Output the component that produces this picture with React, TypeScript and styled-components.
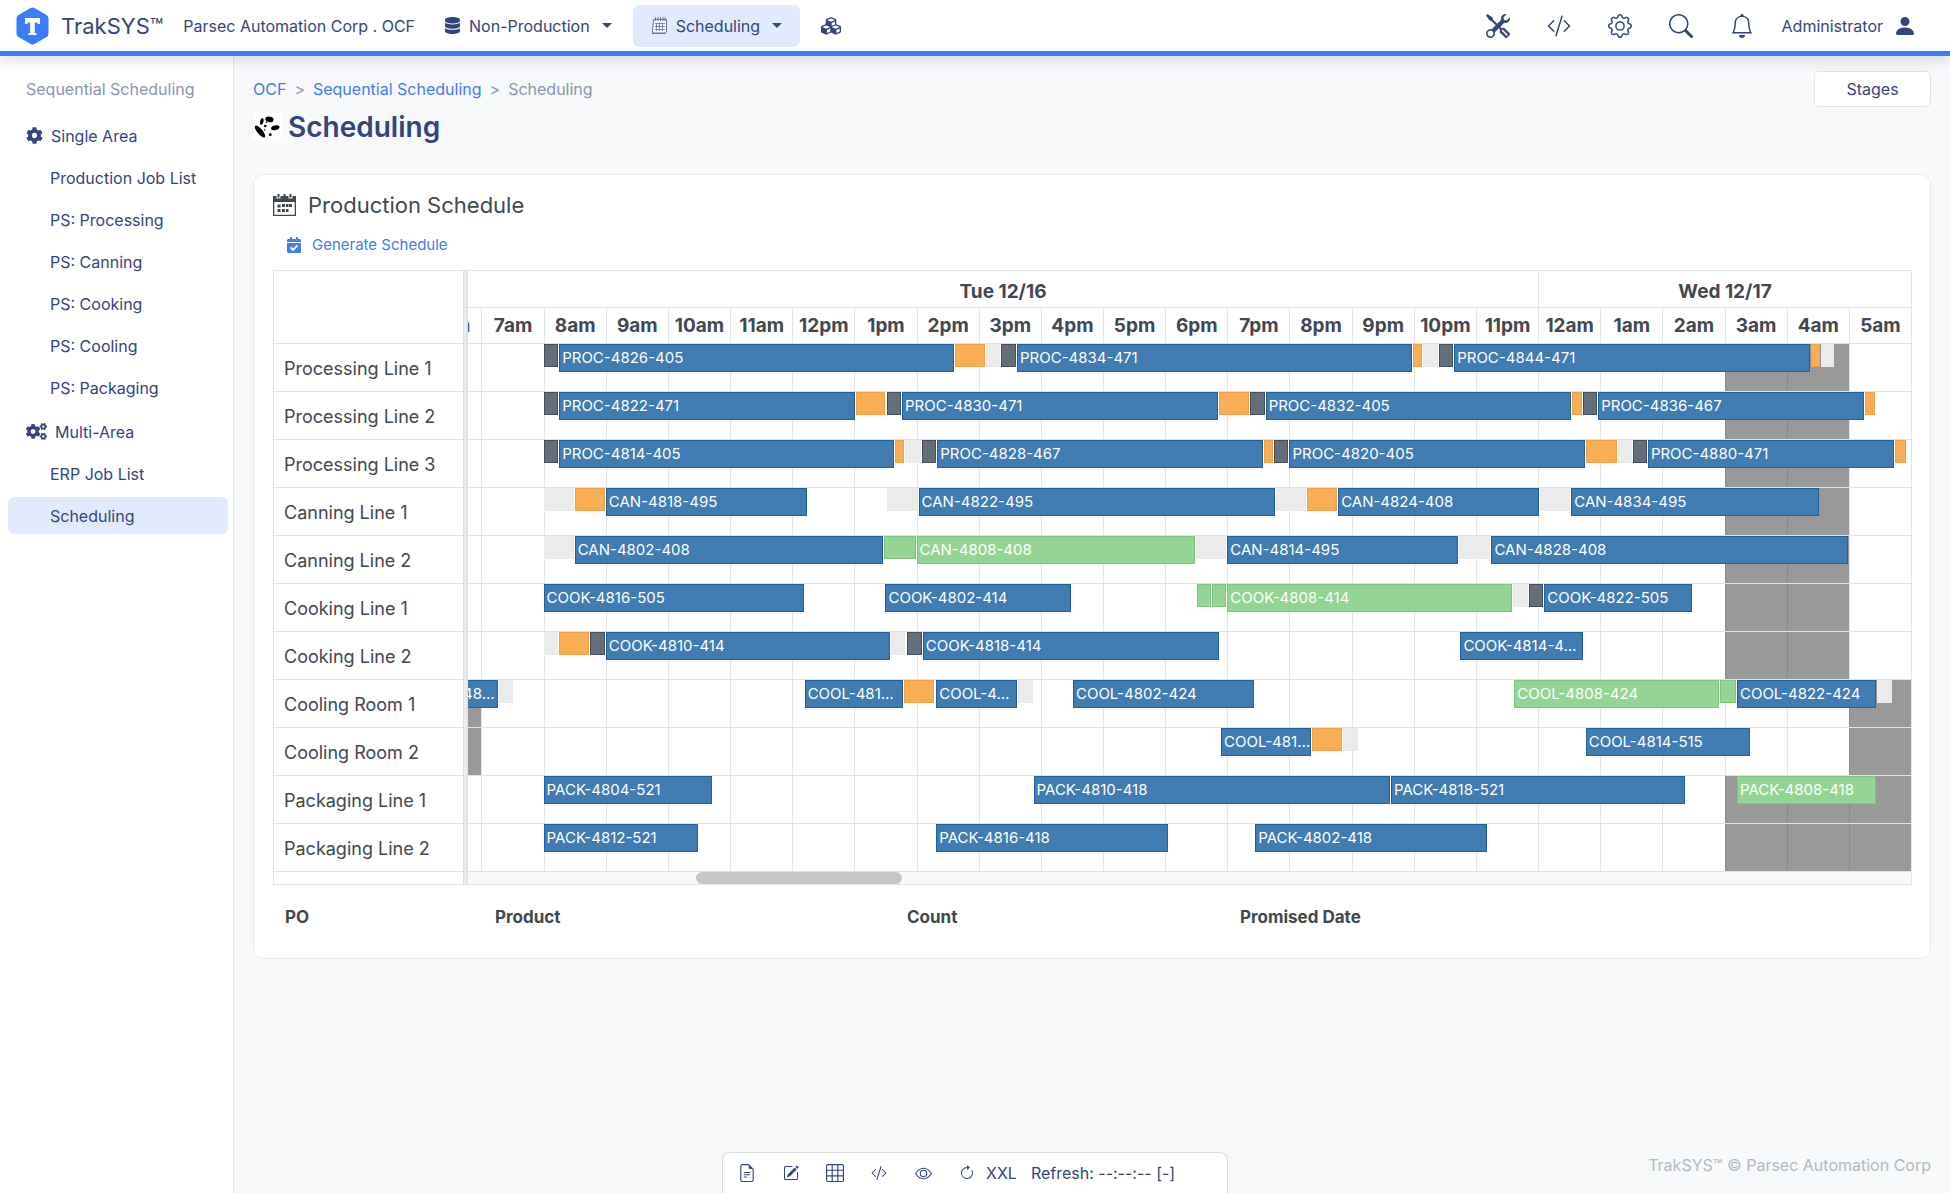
import React from "react";
import styled, { createGlobalStyle, css } from "styled-components";
import {
  BsTools,
  BsCodeSlash,
  BsGear,
  BsSearch,
  BsBell,
  BsPersonFill,
  BsFileEarmarkText,
  BsPencilSquare,
  BsGrid3X3,
  BsEye,
  BsArrowClockwise,
} from "react-icons/bs";
import { FaDatabase, FaCubes, FaCog, FaCogs, FaCalendarCheck } from "react-icons/fa";

const color = {
  navy: "#33457c",
  blue: "#3b7df8",
  link: "#3f7df0",
  muted: "#8c96b0",
  text: "#42474f",
  line: "#e2e4e6",
  soft: "#e1ebfd",
  page: "#f7f9fb",
};

const GlobalStyle = createGlobalStyle`
  *, *::before, *::after { box-sizing: border-box; }
  body {
    margin: 0;
    background: ${color.page};
    color: ${color.text};
    font-family: Inter, Roboto, sans-serif;
    font-size: 16px;
    line-height: 24px;
  }
  button { font: inherit; color: inherit; cursor: pointer; }
  a { color: inherit; text-decoration: none; }
  h1, h2, p { margin: 0; }
  ul { margin: 0; padding: 0; list-style: none; }
  svg { display: block; flex: none; }
`;

const Page = styled.div`
  display: flex;
  flex-direction: column;
  min-height: 100vh;
`;

/* ---------- top bar ---------- */

const TopBar = styled.header`
  position: relative;
  z-index: 2;
  display: flex;
  align-items: center;
  height: 56px;
  padding: 0 33px 0 16px;
  background: #fff;
  border-bottom: 5px solid ${color.blue};
  box-shadow: 0 4px 14px rgba(40, 55, 80, 0.16);
  color: ${color.navy};
`;

const Brand = styled.a`
  display: flex;
  align-items: center;
  gap: 12px;
  margin-right: 20px;
  font-size: 22px;
`;

const Company = styled.span`
  margin-right: 11px;
`;

const TopNav = styled.nav`
  display: flex;
  gap: 3px;
`;

const NavButton = styled.button<{ $active?: boolean }>`
  display: flex;
  align-items: center;
  gap: 8px;
  height: 42px;
  padding: 0 18px;
  border: 0;
  border-radius: 6px;
  background: ${(p) => (p.$active ? color.soft : "transparent")};
`;

const Caret = styled.span`
  margin-left: 4px;
  border: 5px solid transparent;
  border-top-color: currentColor;
  border-bottom-width: 0;
`;

const TopIcons = styled.div`
  display: flex;
  align-items: center;
  gap: 37px;
  margin-left: auto;
`;

const IconButton = styled.button`
  display: flex;
  padding: 0;
  border: 0;
  background: none;
`;

const UserButton = styled(IconButton)`
  align-items: center;
  gap: 10px;
  margin-left: -9px;
`;

/* ---------- side bar ---------- */

const Body = styled.div`
  display: flex;
  flex: 1;
`;

const SideBar = styled.nav`
  display: flex;
  flex: none;
  flex-direction: column;
  gap: 7px;
  width: 234px;
  padding: 21px 5px 20px 8px;
  background: #fff;
  border-right: 1px solid ${color.line};
  color: ${color.navy};
`;

const SideTitle = styled.p`
  padding: 0 18px;
  margin-bottom: 9px;
  color: ${color.muted};
`;

const SideGroup = styled.ul`
  display: flex;
  flex-direction: column;
  gap: 5px;
`;

const SideHeading = styled.li`
  display: flex;
  align-items: center;
  gap: 8px;
  height: 37px;
  padding-left: 18px;
`;

const SideLink = styled.a<{ $active?: boolean }>`
  display: flex;
  align-items: center;
  height: 37px;
  padding-left: 42px;
  border-radius: 6px;
  background: ${(p) => (p.$active ? color.soft : "transparent")};
`;

/* ---------- main column ---------- */

const Main = styled.main`
  display: flex;
  flex: 1;
  flex-direction: column;
  min-width: 0;
  padding: 15px 19px 17px;
`;

const PageHead = styled.div`
  display: flex;
  align-items: flex-start;
  justify-content: space-between;
  margin-bottom: 29px;
`;

const Crumbs = styled.nav`
  display: flex;
  gap: 8px;
  margin: 6px 0 8px;
  color: ${color.muted};

  a { color: ${color.link}; }
`;

const PageTitle = styled.h1`
  display: flex;
  align-items: center;
  gap: 7px;
  font-size: 28px;
  font-weight: 600;
  line-height: 36px;
  color: ${color.navy};
`;

const StagesButton = styled.button`
  width: 117px;
  height: 36px;
  border: 1px solid ${color.line};
  border-radius: 5px;
  background: #fff;
  color: ${color.navy};
`;

const Card = styled.section`
  padding: 18px 18px 25px 19px;
  border: 1px solid #e6eaef;
  border-radius: 10px;
  background: #fff;
`;

const CardTitle = styled.h2`
  display: flex;
  align-items: center;
  gap: 12px;
  margin-bottom: 16px;
  font-size: 22px;
  font-weight: 400;
`;

const ActionLink = styled.a`
  display: inline-flex;
  align-items: center;
  gap: 10px;
  padding-left: 13px;
  margin-bottom: 13px;
  font-size: 15px;
  color: ${color.link};
`;

/* ---------- schedule ---------- */

const Board = styled.div`
  display: grid;
  grid-template-columns: 189px 5px minmax(0, 1fr);
  border: 1px solid ${color.line};
`;

const Divider = styled.div`
  background: #ebebeb;
  border: solid #dcdddf;
  border-width: 0 1px;
`;

const LabelHead = styled.div`
  height: 73px;
  border-bottom: 1px solid ${color.line};
`;

const LineLabel = styled.div`
  height: 48px;
  padding: 13px 10px 0;
  border-bottom: 1px solid ${color.line};
  font-size: 18px;
  white-space: nowrap;
`;

const Timeline = styled.div`
  display: flex;
  flex-direction: column;
  overflow: hidden;
`;

const HeadText = css`
  display: flex;
  align-items: center;
  justify-content: center;
  font-size: 19px;
  font-weight: 700;
  white-space: nowrap;
`;

const DayRow = styled.div`
  display: grid;
  grid-template-columns: minmax(0, 1033fr) minmax(0, 360fr);
  height: 37px;
  border-bottom: 1px solid ${color.line};
`;

const Day = styled.div`
  ${HeadText}
  padding-top: 6px;

  & + & { border-left: 1px solid ${color.line}; }
`;

const hourColumns = css`
  display: grid;
  grid-template-columns: minmax(0, 13fr) repeat(23, minmax(0, 60fr));
`;

const HourRow = styled.div`
  ${hourColumns}
  height: 36px;
  border-bottom: 1px solid ${color.line};
`;

const Hour = styled.div`
  ${HeadText}
  overflow: hidden;

  & + & { border-left: 1px solid ${color.line}; }
  &:first-child {
    justify-content: flex-end;
    padding-right: 11px;
    color: #2c5f9e;
  }
`;

const Lanes = styled.div`
  position: relative;
`;

const LaneGrid = styled.div`
  ${hourColumns}
  position: absolute;
  inset: 0;
`;

const HourLine = styled.div`
  & + & { border-left: 1px solid ${color.line}; }
`;

const Lane = styled.div`
  position: relative;
  height: 48px;
  border-bottom: 1px solid ${color.line};
`;

const Closed = styled.div`
  position: absolute;
  top: 0;
  bottom: 0;
  background: rgba(0, 0, 0, 0.4);
`;

type Kind = "job" | "hot" | "hotStep" | "clean" | "setup" | "wait";

const barColors: Record<Kind, [string, string]> = {
  job: ["#407bb1", "#22609c"],
  hot: ["#94d494", "#7ec67e"],
  hotStep: ["#94d494", "#7ec67e"],
  clean: ["#f9af58", "#f2a144"],
  setup: ["#656f7c", "#434d5b"],
  wait: ["#ebebeb", "#ebebeb"],
};

const Bar = styled.div<{ $kind: Kind }>`
  position: absolute;
  top: 0;
  height: ${(p) => (p.$kind === "job" || p.$kind === "hot" ? 28 : 23)}px;
  padding-left: 2px;
  border: 1px solid ${(p) => barColors[p.$kind][1]};
  background: ${(p) => barColors[p.$kind][0]};
  background-clip: padding-box;
  color: #fff;
  font-size: 15px;
  line-height: 26px;
  overflow: hidden;
  white-space: nowrap;
`;

const ScrollTrack = styled.div`
  height: 12px;
  background: #f8f9fa;
`;

const ScrollThumb = styled.div`
  width: 206px;
  height: 12px;
  margin-left: 15.8%;
  border-radius: 6px;
  background: #c4c6c7;
`;

const Orders = styled.table`
  width: 100%;
  margin-top: 16px;
  border-collapse: collapse;
  table-layout: fixed;

  th {
    padding: 4px 12px;
    text-align: left;
    font-size: 17px;
    font-weight: 700;
  }
  th:nth-child(1) { width: 210px; }
  th:nth-child(2) { width: 412px; }
  th:nth-child(3) { width: 333px; }
`;

/* ---------- footer ---------- */

const Copyright = styled.footer`
  margin-top: auto;
  padding-top: 24px;
  line-height: 22px;
  text-align: right;
  color: #b1b9c2;
`;

const ToolStrip = styled.div`
  position: fixed;
  bottom: 0;
  left: 50%;
  z-index: 3;
  display: flex;
  align-items: center;
  width: 506px;
  height: 41px;
  padding: 0 14px;
  border: 1px solid #d9dde2;
  border-bottom: 0;
  border-radius: 8px 8px 0 0;
  background: #fff;
  color: ${color.navy};
  transform: translateX(-50%);
`;

const ToolButton = styled(IconButton)`
  width: 20px;
  justify-content: center;
  margin-right: 24px;

  &:last-of-type { margin-right: 9px; }
`;

const ToolText = styled.span`
  margin-right: 14px;
`;

/* ---------- data ---------- */

const VIEW_START = 407;
const VIEW_MINUTES = 1393;

type Entry = [Kind, number, number, string?];

interface LineRow {
  name: string;
  closed: [number, number][];
  bars: Entry[];
}

const night: [number, number][] = [[1620, 1740]];
const cooling: [number, number][] = [[VIEW_START, 420], [1740, 1800]];
const packing: [number, number][] = [[1620, 1800]];

const lines: LineRow[] = [
  {
    name: "Processing Line 1",
    closed: night,
    bars: [
      ["setup", 480, 495],
      ["job", 495, 877, "PROC-4826-405"],
      ["clean", 877, 907],
      ["wait", 907, 922],
      ["setup", 922, 937],
      ["job", 937, 1319, "PROC-4834-471"],
      ["clean", 1319, 1329],
      ["wait", 1329, 1344],
      ["setup", 1344, 1359],
      ["job", 1359, 1703, "PROC-4844-471"],
      ["clean", 1703, 1713],
      ["wait", 1713, 1727],
    ],
  },
  {
    name: "Processing Line 2",
    closed: night,
    bars: [
      ["setup", 480, 495],
      ["job", 495, 782, "PROC-4822-471"],
      ["clean", 782, 811],
      ["setup", 811, 826],
      ["job", 826, 1132, "PROC-4830-471"],
      ["clean", 1132, 1162],
      ["setup", 1162, 1177],
      ["job", 1177, 1473, "PROC-4832-405"],
      ["clean", 1473, 1483],
      ["setup", 1483, 1498],
      ["job", 1498, 1756, "PROC-4836-467"],
      ["clean", 1756, 1766],
    ],
  },
  {
    name: "Processing Line 3",
    closed: night,
    bars: [
      ["setup", 480, 495],
      ["job", 495, 819, "PROC-4814-405"],
      ["clean", 819, 829],
      ["wait", 829, 845],
      ["setup", 845, 860],
      ["job", 860, 1175, "PROC-4828-467"],
      ["clean", 1175, 1185],
      ["setup", 1185, 1200],
      ["job", 1200, 1486, "PROC-4820-405"],
      ["clean", 1486, 1517],
      ["wait", 1517, 1532],
      ["setup", 1532, 1546],
      ["job", 1546, 1785, "PROC-4880-471"],
      ["clean", 1785, 1796],
    ],
  },
  {
    name: "Canning Line 1",
    closed: night,
    bars: [
      ["wait", 480, 510],
      ["clean", 510, 540],
      ["job", 540, 735, "CAN-4818-495"],
      ["wait", 811, 842],
      ["job", 842, 1187, "CAN-4822-495"],
      ["wait", 1187, 1217],
      ["clean", 1217, 1247],
      ["job", 1247, 1442, "CAN-4824-408"],
      ["wait", 1442, 1472],
      ["job", 1472, 1712, "CAN-4834-495"],
    ],
  },
  {
    name: "Canning Line 2",
    closed: night,
    bars: [
      ["wait", 480, 510],
      ["job", 510, 809, "CAN-4802-408"],
      ["hotStep", 809, 840],
      ["hot", 840, 1110, "CAN-4808-408"],
      ["wait", 1110, 1140],
      ["job", 1140, 1364, "CAN-4814-495"],
      ["wait", 1364, 1395],
      ["job", 1395, 1740, "CAN-4828-408"],
    ],
  },
  {
    name: "Cooking Line 1",
    closed: night,
    bars: [
      ["job", 480, 732, "COOK-4816-505"],
      ["job", 810, 990, "COOK-4802-414"],
      ["hotStep", 1111, 1125],
      ["hotStep", 1125, 1140],
      ["hot", 1140, 1416, "COOK-4808-414"],
      ["wait", 1416, 1431],
      ["setup", 1431, 1446],
      ["job", 1446, 1590, "COOK-4822-505"],
    ],
  },
  {
    name: "Cooking Line 2",
    closed: night,
    bars: [
      ["wait", 480, 495],
      ["clean", 495, 525],
      ["setup", 525, 540],
      ["job", 540, 815, "COOK-4810-414"],
      ["wait", 815, 830],
      ["setup", 831, 846],
      ["job", 846, 1133, "COOK-4818-414"],
      ["job", 1365, 1484, "COOK-4814-4…"],
    ],
  },
  {
    name: "Cooling Room 1",
    closed: cooling,
    bars: [
      ["job", 353, 437, "COOL-48…"],
      ["wait", 437, 451],
      ["job", 732, 828, "COOL-481…"],
      ["clean", 828, 858],
      ["job", 859, 938, "COOL-4…"],
      ["wait", 938, 953],
      ["job", 991, 1167, "COOL-4802-424"],
      ["hot", 1417, 1616, "COOL-4808-424"],
      ["hotStep", 1616, 1632],
      ["job", 1632, 1767, "COOL-4822-424"],
      ["wait", 1767, 1783],
    ],
  },
  {
    name: "Cooling Room 2",
    closed: cooling,
    bars: [
      ["job", 1134, 1222, "COOL-481…"],
      ["clean", 1222, 1252],
      ["wait", 1252, 1267],
      ["job", 1486, 1646, "COOL-4814-515"],
    ],
  },
  {
    name: "Packaging Line 1",
    closed: packing,
    bars: [
      ["job", 480, 644, "PACK-4804-521"],
      ["job", 953, 1298, "PACK-4810-418"],
      ["job", 1298, 1583, "PACK-4818-521"],
      ["hot", 1632, 1767, "PACK-4808-418"],
    ],
  },
  {
    name: "Packaging Line 2",
    closed: packing,
    bars: [
      ["job", 480, 630, "PACK-4812-521"],
      ["job", 859, 1084, "PACK-4816-418"],
      ["job", 1167, 1392, "PACK-4802-418"],
    ],
  },
];

const hourLabels = Array.from({ length: 24 }, (_, i) => {
  const hour = (i + 6) % 24;
  return `${hour % 12 || 12}${hour < 12 ? "am" : "pm"}`;
});

const span = (from: number, to: number, gap = 0) => ({
  left: `${((from - VIEW_START) / VIEW_MINUTES) * 100}%`,
  width: `calc(${((to - from) / VIEW_MINUTES) * 100}% - ${gap}px)`,
});

/* ---------- drawings ---------- */

const Logo = () => (
  <svg width="33" height="38" viewBox="0 0 33 38" aria-hidden="true">
    <path
      d="M14.5 1.1a4 4 0 0 1 4 0l12 6.900a4 4 0 0 1 2 3.500v15a4 4 0 0 1-2 3.500l-12 6.900a4 4 0 0 1-4 0l-12-6.900a4 4 0 0 1-2-3.500v-15a4 4 0 0 1 2-3.500z"
      fill={color.blue}
    />
    <path d="M9 11h15v6h-2.500v-1.500h-2.700v10.500h1.700v2h-8v-2h1.700V15.500h-2.700V17H9z" fill="#fff" />
  </svg>
);

const NotebookIcon = () => (
  <svg width="17" height="18" viewBox="0 0 17 18" fill="none" stroke="#6877a0" aria-hidden="true">
    <path d="M2.500 2.500h13v12l-1 1.500h-13v-2z" fill="#f3f6fc" />
    <path d="M4.500 0v4M7 0v4M9.500 0v4M12 0v4M14 0v4" />
    <path d="M4 6.500h10M4 9.500h10M4 12.500h10M5.500 6v8M8.500 6v8M11.500 6v8" strokeWidth="0.800" />
    <path d="M1 16.500h14" />
  </svg>
);

const BeansIcon = () => (
  <svg width="28" height="28" viewBox="0 0 28 28" aria-hidden="true">
    <path fill="#fff" d="M0 0h28v28H0z" />
    <ellipse cx="7" cy="18.500" rx="7.400" ry="2.600" transform="rotate(50 7 18.500)" />
    <ellipse cx="8.800" cy="8.500" rx="1.700" ry="3.400" transform="rotate(12 8.800 8.500)" />
    <ellipse cx="16.500" cy="6.300" rx="4.200" ry="2.700" transform="rotate(12 16.500 6.300)" />
    <ellipse cx="22.300" cy="14.800" rx="4.300" ry="2.300" transform="rotate(-14 22.300 14.800)" />
    <circle cx="12.300" cy="13" r="1.300" />
    <circle cx="13.500" cy="9.300" r="0.800" />
    <circle cx="17.300" cy="21.700" r="1.400" />
    <circle cx="11.700" cy="17" r="0.700" />
  </svg>
);

const CalendarIcon = () => (
  <svg width="23" height="22" viewBox="0 0 23 22" fill={color.text} aria-hidden="true">
    <path d="M0 2h3.500v2.500h4V2h8v2.500h4V2H23v20H0zm1.300 6v12.700h20.400V8z" fillRule="evenodd" />
    <path d="M4.500 0h2v3.500h-2zM16.500 0h2v3.500h-2zM10.500 0h2v3h-2z" />
    <path d="M9 10h3v3H9zM13 10h2.500v3H13zM16 10h3v3h-3zM4.500 10.500h3v3h-3zM4.500 15h3v3h-3zM9 15h3v3H9zM13 15h2.500v3H13z" />
  </svg>
);

/* ---------- screen ---------- */

const sideGroups = [
  {
    title: "Single Area",
    icon: <FaCog size={17} />,
    links: ["Production Job List", "PS: Processing", "PS: Canning", "PS: Cooking", "PS: Cooling", "PS: Packaging"],
  },
  { title: "Multi-Area", icon: <FaCogs size={21} />, links: ["ERP Job List", "Scheduling"] },
];

const Header = () => (
  <TopBar>
    <Brand href="#">
      <Logo />
      TrakSYS™
    </Brand>
    <Company>Parsec Automation Corp . OCF</Company>
    <TopNav>
      <NavButton>
        <FaDatabase size={17} />
        Non-Production
        <Caret />
      </NavButton>
      <NavButton $active>
        <NotebookIcon />
        Scheduling
        <Caret />
      </NavButton>
      <NavButton aria-label="Modules">
        <FaCubes size={20} />
      </NavButton>
    </TopNav>
    <TopIcons>
      <IconButton aria-label="Tools"><BsTools size={24} /></IconButton>
      <IconButton aria-label="Code"><BsCodeSlash size={24} /></IconButton>
      <IconButton aria-label="Settings"><BsGear size={24} /></IconButton>
      <IconButton aria-label="Search"><BsSearch size={24} /></IconButton>
      <IconButton aria-label="Alerts"><BsBell size={24} /></IconButton>
      <UserButton>
        Administrator
        <BsPersonFill size={24} />
      </UserButton>
    </TopIcons>
  </TopBar>
);

const Side = () => (
  <SideBar>
    <SideTitle>Sequential Scheduling</SideTitle>
    {sideGroups.map((group) => (
      <SideGroup key={group.title}>
        <SideHeading>
          {group.icon}
          {group.title}
        </SideHeading>
        {group.links.map((link) => (
          <li key={link}>
            <SideLink href="#" $active={link === "Scheduling"}>{link}</SideLink>
          </li>
        ))}
      </SideGroup>
    ))}
  </SideBar>
);

const Schedule = () => (
  <Board>
    <div>
      <LabelHead />
      {lines.map((line) => (
        <LineLabel key={line.name}>{line.name}</LineLabel>
      ))}
    </div>
    <Divider />
    <Timeline>
      <DayRow>
        <Day>Tue 12/16</Day>
        <Day>Wed 12/17</Day>
      </DayRow>
      <HourRow>
        {hourLabels.map((label) => (
          <Hour key={label}>{label}</Hour>
        ))}
      </HourRow>
      <Lanes>
        <LaneGrid>
          {hourLabels.map((label) => (
            <HourLine key={label} />
          ))}
        </LaneGrid>
        {lines.map((line) => (
          <Lane key={line.name}>
            {line.closed.map(([from, to]) => (
              <Closed key={from} style={span(from, to)} />
            ))}
            {line.bars.map(([kind, from, to, label]) => (
              <Bar key={from} $kind={kind} style={span(from, to, 1)}>
                {label}
              </Bar>
            ))}
          </Lane>
        ))}
      </Lanes>
      <ScrollTrack>
        <ScrollThumb />
      </ScrollTrack>
    </Timeline>
  </Board>
);

export default function App() {
  return (
    <Page>
      <GlobalStyle />
      <Header />
      <Body>
        <Side />
        <Main>
          <PageHead>
            <div>
              <Crumbs aria-label="Breadcrumb">
                <a href="#">OCF</a>
                <span>&gt;</span>
                <a href="#">Sequential Scheduling</a>
                <span>&gt;</span>
                <span>Scheduling</span>
              </Crumbs>
              <PageTitle>
                <BeansIcon />
                Scheduling
              </PageTitle>
            </div>
            <StagesButton>Stages</StagesButton>
          </PageHead>
          <Card>
            <CardTitle>
              <CalendarIcon />
              Production Schedule
            </CardTitle>
            <ActionLink href="#">
              <FaCalendarCheck size={16} />
              Generate Schedule
            </ActionLink>
            <Schedule />
            <Orders>
              <thead>
                <tr>
                  <th>PO</th>
                  <th>Product</th>
                  <th>Count</th>
                  <th>Promised Date</th>
                </tr>
              </thead>
            </Orders>
          </Card>
          <Copyright>TrakSYS™ © Parsec Automation Corp</Copyright>
        </Main>
      </Body>
      <ToolStrip>
        <ToolButton aria-label="Document"><BsFileEarmarkText size={18} /></ToolButton>
        <ToolButton aria-label="Edit"><BsPencilSquare size={16} /></ToolButton>
        <ToolButton aria-label="Grid"><BsGrid3X3 size={18} /></ToolButton>
        <ToolButton aria-label="Source"><BsCodeSlash size={16} /></ToolButton>
        <ToolButton aria-label="Preview"><BsEye size={17} /></ToolButton>
        <ToolButton aria-label="Reload"><BsArrowClockwise size={16} /></ToolButton>
        <ToolText>XXL</ToolText>
        <ToolText>Refresh: --:--:-- [-]</ToolText>
      </ToolStrip>
    </Page>
  );
}
